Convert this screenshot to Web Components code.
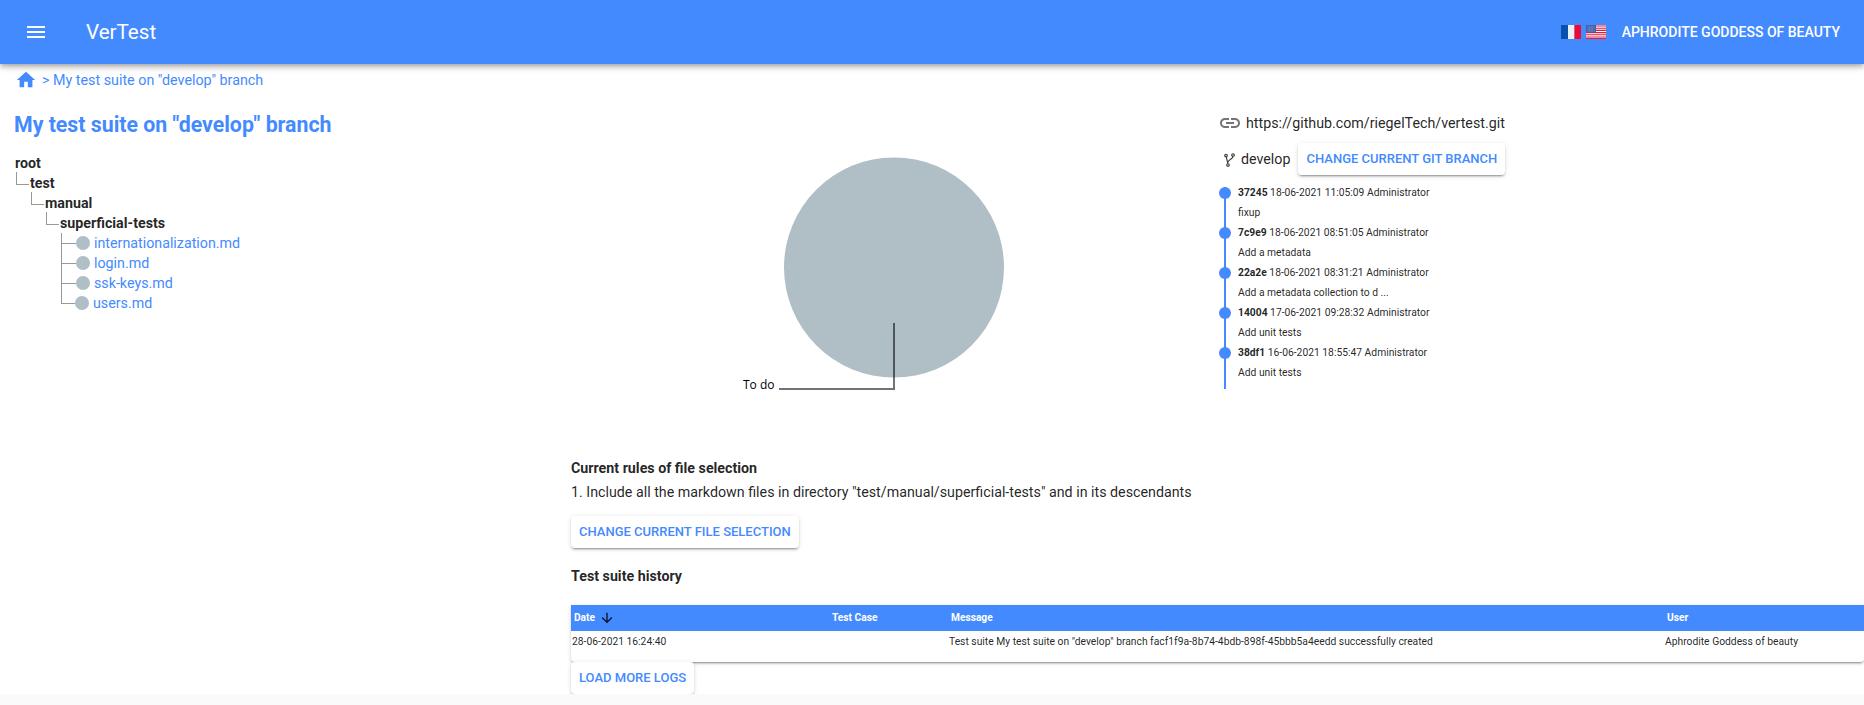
<!DOCTYPE html>
<html lang="en">
<head>
<meta charset="utf-8">
<title>VerTest</title>
<style>
    html, body { margin: 0; height: 100%; background: #fafafa; overflow: hidden; }
    body { font-family: Roboto, "Liberation Sans", sans-serif; color: rgba(0,0,0,0.87); }
</style>
</head>
<body>
<vt-app></vt-app>

<template id="tpl-app">
    <style>
        :host { display: block; height: 694px; background: #fff; overflow: hidden; }
        .main { display: grid; grid-template-columns: 571px 1fr; }
        .left { padding: 14px 0 0 14px; }
        h1 { margin: 0 0 13px; height: 30px; font-size: 21.3px; line-height: 30px; font-weight: 700; color: #448aff; }
        .top { display: flex; height: 362px; }
        h2 { margin: 0; font-size: 14.25px; line-height: 20px; font-weight: 700; }
        p { margin: 4px 0 14px; font-size: 14.25px; line-height: 20px; }
        .history { margin: 18px 0 19px; }
    </style>
    <vt-toolbar></vt-toolbar>
    <vt-breadcrumb>My test suite on "develop" branch</vt-breadcrumb>
    <div class="main">
        <div class="left">
            <h1>My test suite on "develop" branch</h1>
            <vt-tree></vt-tree>
        </div>
        <div>
            <div class="top">
                <vt-pie></vt-pie>
                <vt-git></vt-git>
            </div>
            <h2>Current rules of file selection</h2>
            <p>1. Include all the markdown files in directory "test/manual/superficial-tests" and in its descendants</p>
            <vt-button>Change current file selection</vt-button>
            <h2 class="history">Test suite history</h2>
            <vt-logs></vt-logs>
            <vt-button>Load more logs</vt-button>
        </div>
    </div>
</template>

<template id="tpl-toolbar">
    <style>
        :host {
            display: flex; align-items: center; height: 64px; position: relative; z-index: 2;
            background: #448aff; color: #fff;
            box-shadow: 0 2px 4px -1px rgba(0,0,0,.2), 0 4px 5px 0 rgba(0,0,0,.14), 0 1px 10px 0 rgba(0,0,0,.12);
        }
        .menu { width: 24px; height: 24px; margin-left: 24px; fill: #fff; }
        .brand { margin-left: 38px; font-size: 20.6px; }
        .flags { margin-left: auto; display: flex; gap: 5px; }
        .user { margin: 0 24px 0 16px; font-size: 14px; font-weight: 500; text-transform: uppercase; }
        svg.flag { width: 20px; height: 14px; display: block; }
    </style>
    <svg class="menu" viewBox="0 0 24 24"><path d="M3 18h18v-2H3v2zm0-5h18v-2H3v2zm0-7v2h18V6H3z"/></svg>
    <span class="brand">VerTest</span>
    <div class="flags">
        <svg class="flag" viewBox="0 0 20 14"><rect width="7" height="14" fill="#0b50ae"/><rect x="7" width="6.5" height="14" fill="#f0f0f4"/><rect x="13.5" width="6.5" height="14" fill="#ee0a32"/></svg>
        <svg class="flag" viewBox="0 0 20 14"><rect width="20" height="14" fill="#fff"/><path d="M0 1h20M0 3.2h20M0 5.4h20M0 7.6h20M0 9.8h20M0 12h20" stroke="#e4193c" stroke-width="1.1"/><rect y="13" width="20" height="1" fill="#e4193c"/><rect width="10" height="7.6" fill="#3f5fa8"/><path d="M1.5 2h7M1.5 4h7M1.5 6h7" stroke="#a9b8dc" stroke-width=".8" stroke-dasharray="1 .6"/></svg>
    </div>
    <span class="user">Aphrodite Goddess of beauty</span>
</template>

<template id="tpl-breadcrumb">
    <style>
        :host { display: flex; align-items: center; height: 32px; padding-left: 15px; font-size: 14.3px; color: #448aff; }
        svg { width: 22px; height: 22px; fill: #448aff; margin-right: 5px; }
    </style>
    <svg viewBox="0 0 24 24"><path d="M10 20v-6h4v6h5v-8h3L12 3 2 12h3v8z"/></svg>
    <span>&gt;&nbsp;<slot></slot></span>
</template>

<template id="tpl-tree">
    <style>
        :host { display: block; margin-left: 1px; }
    </style>
    <vt-tree-node depth="0" label="root"></vt-tree-node>
    <vt-tree-node depth="1" label="test"></vt-tree-node>
    <vt-tree-node depth="2" label="manual"></vt-tree-node>
    <vt-tree-node depth="3" label="superficial-tests"></vt-tree-node>
    <vt-tree-node depth="4" file label="internationalization.md"></vt-tree-node>
    <vt-tree-node depth="4" file label="login.md"></vt-tree-node>
    <vt-tree-node depth="4" file label="ssk-keys.md"></vt-tree-node>
    <vt-tree-node depth="4" file last label="users.md"></vt-tree-node>
</template>

<template id="tpl-tree-node">
    <style>
        :host { display: flex; align-items: center; height: 20px; font-size: 14.25px; font-weight: 700; }
        .indent { flex: none; }
        .dir {
            flex: none; align-self: flex-start; box-sizing: border-box; width: 13px; height: 13px; margin: -1px 1px 0 0;
            border-left: 1px solid #999; border-bottom: 1px solid #999;
        }
        .leaf {
            flex: none; align-self: stretch; width: 15px;
            background: linear-gradient(#999, #999) 0 0 / 1px 100% no-repeat, linear-gradient(#999, #999) 0 10px / 100% 1px no-repeat;
        }
        :host([last]) .leaf { width: 14px; background-size: 1px 10px, 100% 1px; }
        .dot { flex: none; width: 14px; height: 14px; border-radius: 50%; background: #b0bec5; margin-right: 4px; }
        a { color: #448aff; font-weight: 400; text-decoration: none; }
    </style>
    <span class="indent"></span><span class="conn"></span><span class="label"></span>
</template>

<template id="tpl-pie">
    <style>
        :host { display: block; flex: none; width: 640px; }
        svg { display: block; }
        text { font: 12px "Open Sans", sans-serif; fill: #000; }
    </style>
    <svg width="640" height="340" viewBox="0 0 640 340">
        <circle cx="323" cy="171.5" r="110" fill="#b0bec5"/>
        <path d="M323 227V293H208" fill="none" stroke="#000" stroke-opacity=".55" stroke-width="2"/>
        <text x="172" y="293">To do</text>
    </svg>
</template>

<template id="tpl-git">
    <style>
        :host { display: block; padding: 15px 0 0 7px; font-size: 14.25px; }
        .repo, .branch { display: flex; align-items: center; }
        .repo { height: 24px; gap: 4px; }
        .repo svg { width: 24px; height: 24px; fill: #757575; }
        .branch { height: 32px; margin: 8px 0 8px; }
        .branch svg { width: 16px; height: 16px; margin: 2px 3px 0 4px; }
        .branch span { margin-right: 8px; }
    </style>
    <div class="repo">
        <svg viewBox="0 0 24 24"><path d="M3.9 12c0-1.71 1.39-3.1 3.1-3.1h4V7H7c-2.76 0-5 2.24-5 5s2.24 5 5 5h4v-1.9H7c-1.71 0-3.1-1.39-3.1-3.1zM8 13h8v-2H8v2zm9-6h-4v1.9h4c1.71 0 3.1 1.39 3.1 3.1s-1.39 3.1-3.1 3.1h-4V17h4c2.76 0 5-2.24 5-5s-2.24-5-5-5z"/></svg>
        <span>https://github.com/riegelTech/vertest.git</span>
    </div>
    <div class="branch">
        <svg viewBox="0 0 16 16" fill="none" stroke="#333" stroke-width="1.1"><circle cx="4" cy="3.5" r="1.3"/><circle cx="11" cy="3" r="1.3"/><circle cx="6" cy="13" r="1.3"/><path d="M4.3 4.8L5.8 11.7M11 4.3C11 7.5 6.6 7 5.9 10.5"/></svg>
        <span>develop</span>
        <vt-button>Change current git branch</vt-button>
    </div>
    <vt-commit sha="37245" date="18-06-2021 11:05:09">fixup</vt-commit>
    <vt-commit sha="7c9e9" date="18-06-2021 08:51:05">Add a metadata</vt-commit>
    <vt-commit sha="22a2e" date="18-06-2021 08:31:21">Add a metadata collection to d ...</vt-commit>
    <vt-commit sha="14004" date="17-06-2021 09:28:32">Add unit tests</vt-commit>
    <vt-commit sha="38df1" date="16-06-2021 18:55:47">Add unit tests</vt-commit>
</template>

<template id="tpl-commit">
    <style>
        :host { display: flex; height: 40px; font-size: 10.3px; line-height: 20px; }
        :host(:last-of-type) { height: 46px; }
        .rail {
            flex: none; width: 12px; margin: 0 7px 0 1px;
            background: linear-gradient(#448aff, #448aff) center / 2px 100% no-repeat;
            display: flex; justify-content: center; padding-top: 4px; box-sizing: border-box;
        }
        :host(:first-of-type) .rail { background-position: center 4px; }
        .rail i { display: block; width: 12px; height: 12px; border-radius: 50%; background: #448aff; }
        b { font-weight: 700; }
    </style>
    <div class="rail"><i></i></div>
    <div>
        <div><b class="sha"></b> <span class="date"></span> Administrator</div>
        <div><slot></slot></div>
    </div>
</template>

<template id="tpl-button">
    <style>
        :host {
            display: inline-block; box-sizing: border-box; height: 32px; padding: 0 8px; border-radius: 4px;
            background: #fff; color: #448aff; font-size: 13px; font-weight: 500; line-height: 32px; text-transform: uppercase;
            box-shadow: 0 3px 1px -2px rgba(0,0,0,.2), 0 2px 2px 0 rgba(0,0,0,.14), 0 1px 5px 0 rgba(0,0,0,.12);
        }
    </style>
    <slot></slot>
</template>

<template id="tpl-logs">
    <style>
        :host {
            display: block; font-size: 10.3px; background: #fff; border-radius: 0 0 4px 4px;
            box-shadow: 0 3px 1px -2px rgba(0,0,0,.2), 0 2px 2px 0 rgba(0,0,0,.14), 0 1px 5px 0 rgba(0,0,0,.12);
        }
        .row { display: grid; grid-template-columns: 258px 119px 716px 1fr; }
        .head { box-sizing: border-box; height: 26px; padding-bottom: 1px; align-items: center; background: #448aff; color: #fff; font-weight: 700; font-size: 10.2px; }
        .head span { padding-left: 3px; display: flex; align-items: center; }
        .head svg { width: 16px; height: 16px; margin-left: 4px; fill: rgba(0,0,0,.87); }
        .body { box-sizing: border-box; height: 31px; padding-top: 1px; line-height: 20px; }
        .body span { padding-left: 1px; }
    </style>
    <div class="row head">
        <span>Date<svg viewBox="0 0 24 24"><path d="M20 12l-1.41-1.41L13 16.17V4h-2v12.17l-5.58-5.59L4 12l8 8 8-8z"/></svg></span>
        <span>Test Case</span>
        <span>Message</span>
        <span>User</span>
    </div>
    <div class="row body">
        <span>28-06-2021 16:24:40</span>
        <span></span>
        <span>Test suite My test suite on "develop" branch facf1f9a-8b74-4bdb-898f-45bbb5a4eedd successfully created</span>
        <span>Aphrodite Goddess of beauty</span>
    </div>
</template>

<script>
function define(tag, tplId, init) {
    customElements.define(tag, class extends HTMLElement {
        constructor() {
            super();
            this.attachShadow({ mode: "open" });
            this.shadowRoot.appendChild(document.getElementById(tplId).content.cloneNode(true));
        }
        connectedCallback() {
            if (init) init(this, this.shadowRoot);
        }
    });
}

// 15px per level of depth, the connector takes the last one
function initTreeNode(host, root) {
    const depth = parseInt(host.getAttribute("depth"));
    const isFile = host.hasAttribute("file");
    const conn = root.querySelector(".conn");
    const label = root.querySelector(".label");
    root.querySelector(".indent").style.width = depth > 0 ? (depth - 1) * 15 + 1 + "px" : "0";
    if (isFile) {
        conn.className = "leaf";
        const dot = document.createElement("span");
        dot.className = "dot";
        conn.after(dot);
        const link = document.createElement("a");
        link.textContent = host.getAttribute("label");
        label.appendChild(link);
    } else {
        if (depth > 0) conn.className = "dir";
        label.textContent = host.getAttribute("label");
    }
}

function initCommit(host, root) {
    root.querySelector(".sha").textContent = host.getAttribute("sha");
    root.querySelector(".date").textContent = host.getAttribute("date");
}

define("vt-button", "tpl-button");
define("vt-commit", "tpl-commit", initCommit);
define("vt-git", "tpl-git");
define("vt-pie", "tpl-pie");
define("vt-logs", "tpl-logs");
define("vt-tree-node", "tpl-tree-node", initTreeNode);
define("vt-tree", "tpl-tree");
define("vt-breadcrumb", "tpl-breadcrumb");
define("vt-toolbar", "tpl-toolbar");
define("vt-app", "tpl-app");
</script>
</body>
</html>
